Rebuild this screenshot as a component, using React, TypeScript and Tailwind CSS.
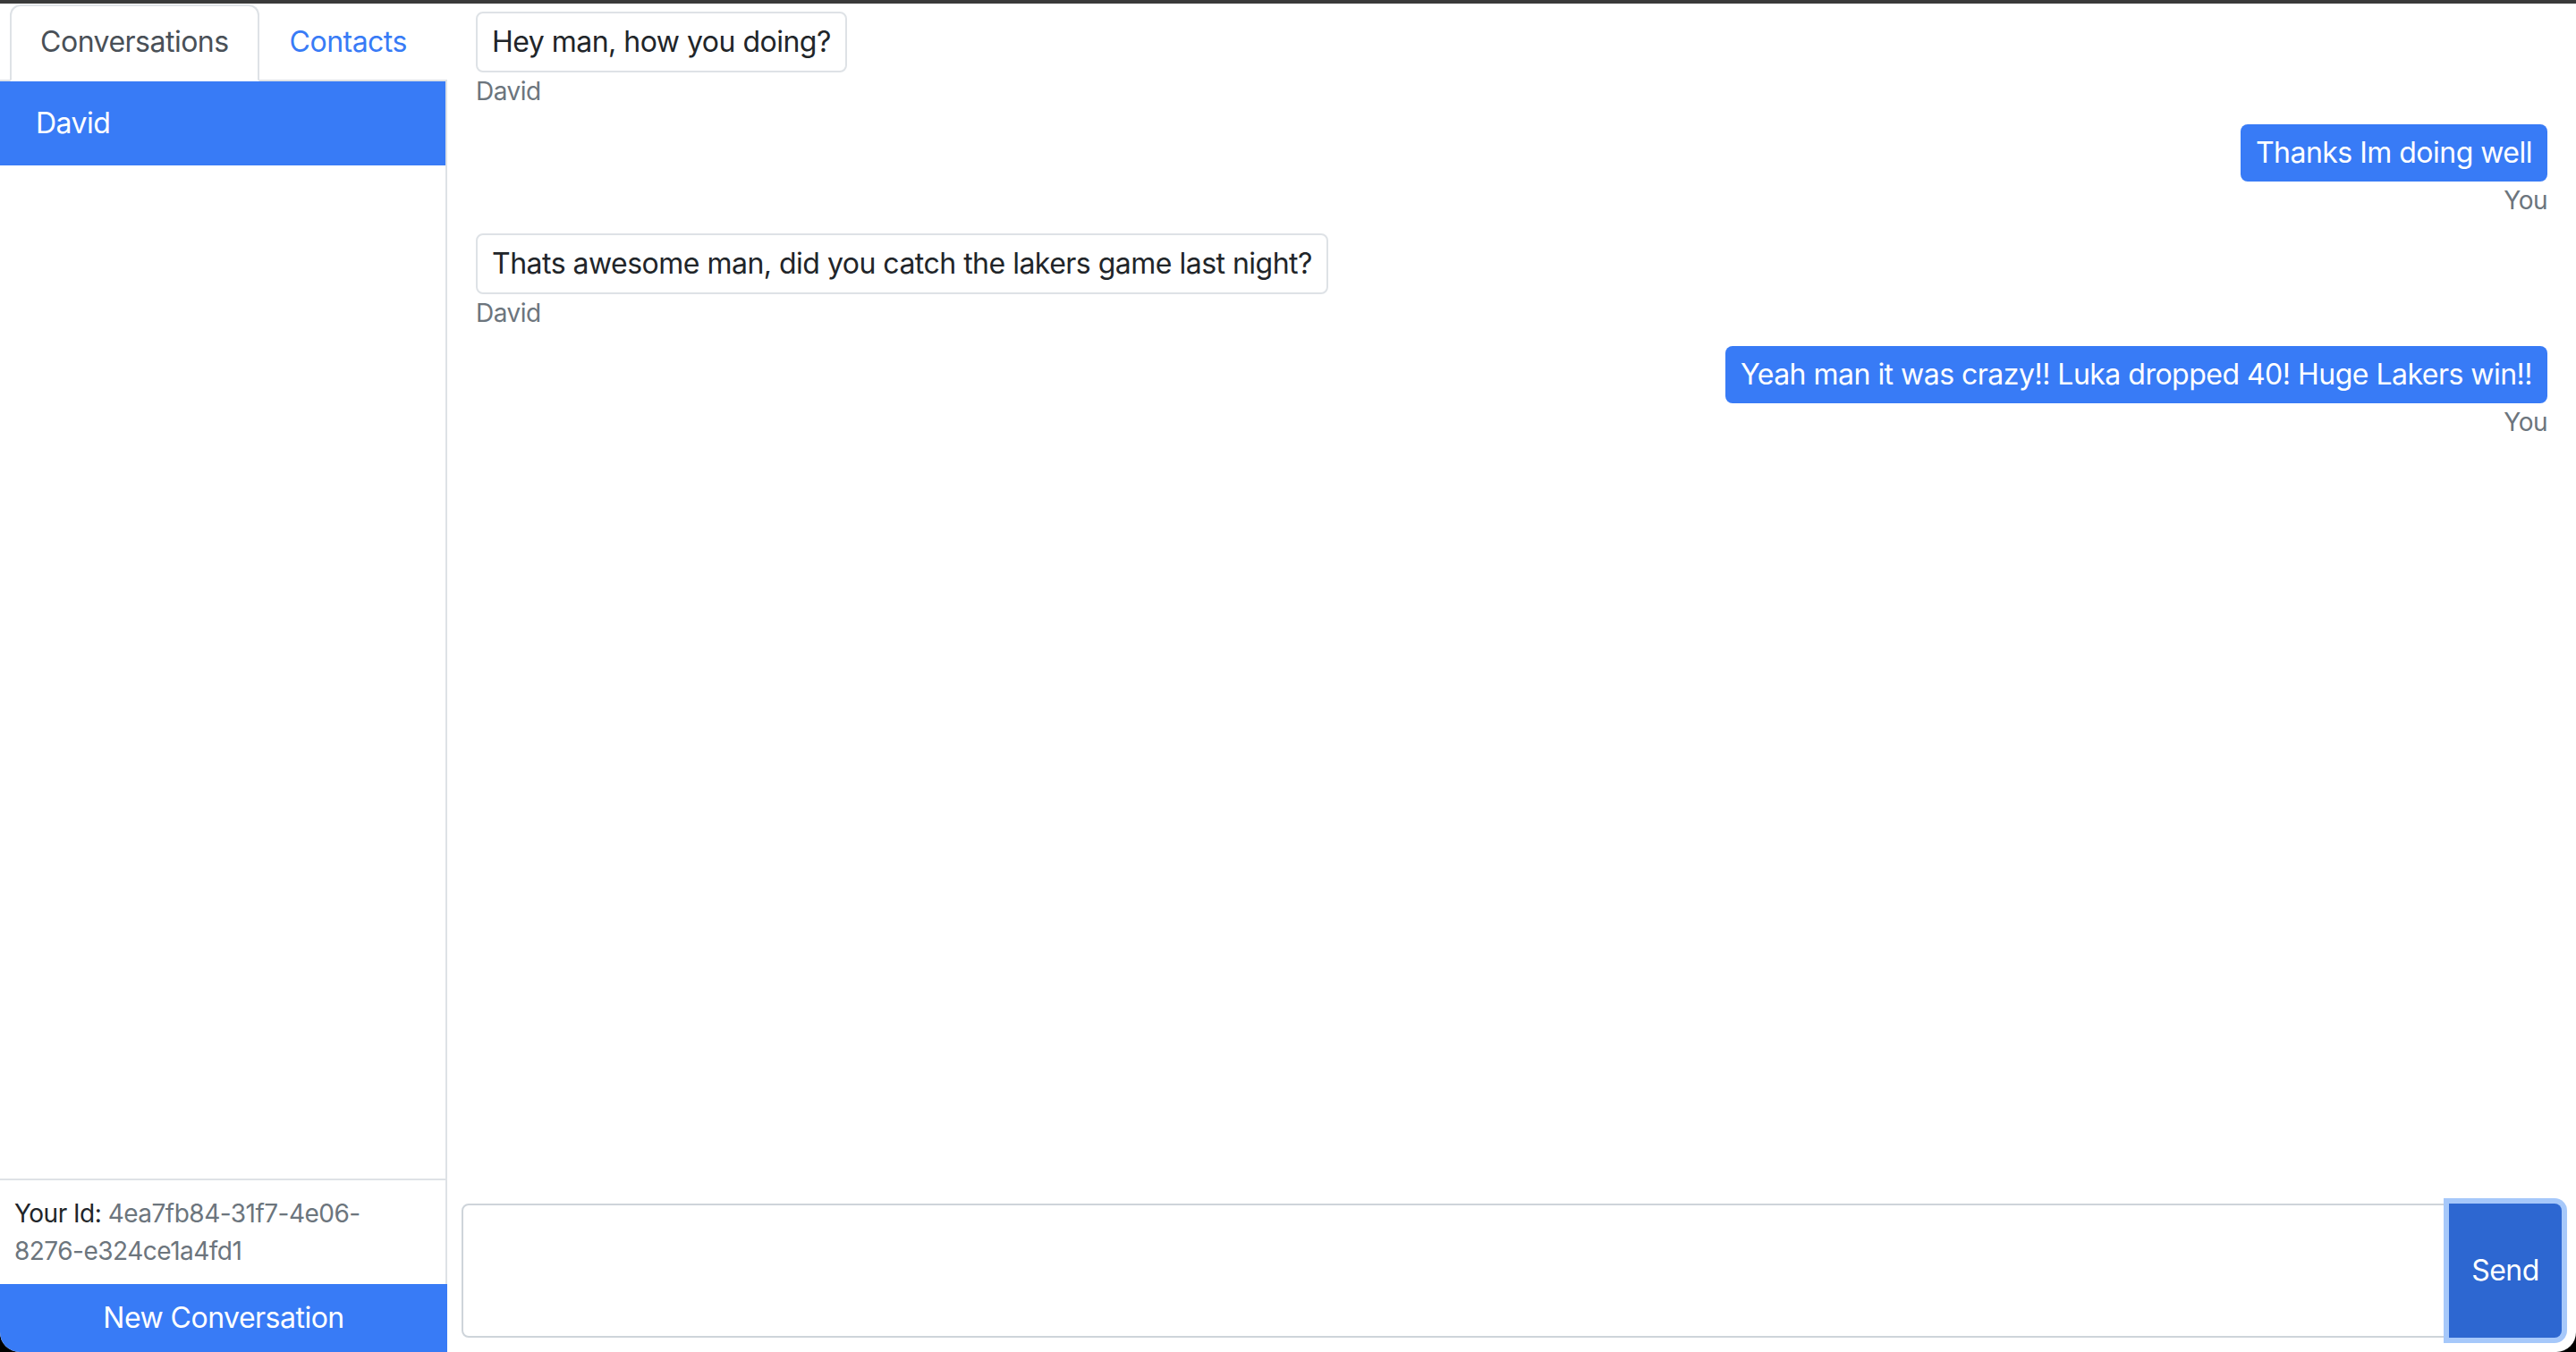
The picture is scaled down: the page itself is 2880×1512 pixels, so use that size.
import { type FC } from 'react';

type Message = { text: string; sender: string; fromMe: boolean };

const messages: Message[] = [
  { text: 'Hey man, how you doing?', sender: 'David', fromMe: false },
  { text: 'Thanks Im doing well', sender: 'You', fromMe: true },
  { text: 'Thats awesome man, did you catch the lakers game last night?', sender: 'David', fromMe: false },
  { text: 'Yeah man it was crazy!! Luka dropped 40! Huge Lakers win!!', sender: 'You', fromMe: true },
];

const Sidebar: FC = () => {
  return (
    <div className="w-[500px] shrink-0 flex flex-col">
      {/* Tabs */}
      <div className="flex justify-center border-b-2 border-[#dee2e6] pt-[1px]">
        <div className="px-8 py-4 text-[32px] leading-[48px] text-[#495057] bg-white border-2 border-[#dee2e6] border-b-white rounded-t-[12px] -mb-[2px]">
          Conversations
        </div>
        <div className="px-8 py-4 text-[32px] leading-[48px] text-[#387bf6] border-2 border-transparent">
          Contacts
        </div>
      </div>

      <div className="flex-1 border-r-2 border-[#dee2e6] overflow-auto">
        <div className="bg-[#387bf6] text-white text-[32px] leading-[47px] px-10 py-6 -mr-[2px] -mt-[1px]">David</div>
      </div>

      <div className="p-4 border-t-2 border-r-2 border-[#dee2e6] text-[28px] leading-[42px] text-[#212529]">
        Your Id: <span className="text-[#6c757d]">4ea7fb84-31f7-4e06-<br />8276-e324ce1a4fd1</span>
      </div>

      <button className="h-[76px] w-full bg-[#387bf6] text-white text-[32px] leading-[48px]">New Conversation</button>
    </div>
  );
};

const Chat: FC = () => {
  return (
    <div className="flex-1 flex flex-col min-w-0">
      <div className="flex-1 flex flex-col overflow-auto px-8 pt-[1px]">
        {messages.map((m, i) => (
          <div key={i} className={`my-2 flex flex-col ${m.fromMe ? 'items-end' : 'items-start'}`}>
            <div
              className={
                m.fromMe
                  ? 'rounded-[8px] px-[17px] py-2 text-[32px] leading-[48px] bg-[#387bf6] text-white'
                  : 'rounded-[8px] px-[16px] py-2 text-[32px] leading-[48px] border-2 border-[#dee2e6] text-[#212529]'
              }
            >
              {m.text}
            </div>
            <div className="text-[28px] leading-[42px] text-[#6c757d]">{m.sender}</div>
          </div>
        ))}
      </div>

      <div className="m-4 flex h-[150px]">
        <textarea className="flex-1 resize-none border-2 border-[#ced4da] rounded-l-[8px] outline-none" />
        <button className="w-[126px] bg-[#2d67d1] text-white text-[32px] rounded-r-[8px] shadow-[0_0_0_6px_#a6c8fa] z-10">
          Send
        </button>
      </div>
    </div>
  );
};

const App: FC = () => {
  return (
    <div className="w-[2880px] h-[1512px] bg-black overflow-hidden font-['Inter',sans-serif] tracking-[-0.032em]">
      <div className="h-full flex flex-col bg-white rounded-b-[22px] overflow-hidden border-t-4 border-[#3a3a3a]">
        <div className="flex-1 flex min-h-0">
          <Sidebar />
          <Chat />
        </div>
      </div>
    </div>
  );
};

export default App;
